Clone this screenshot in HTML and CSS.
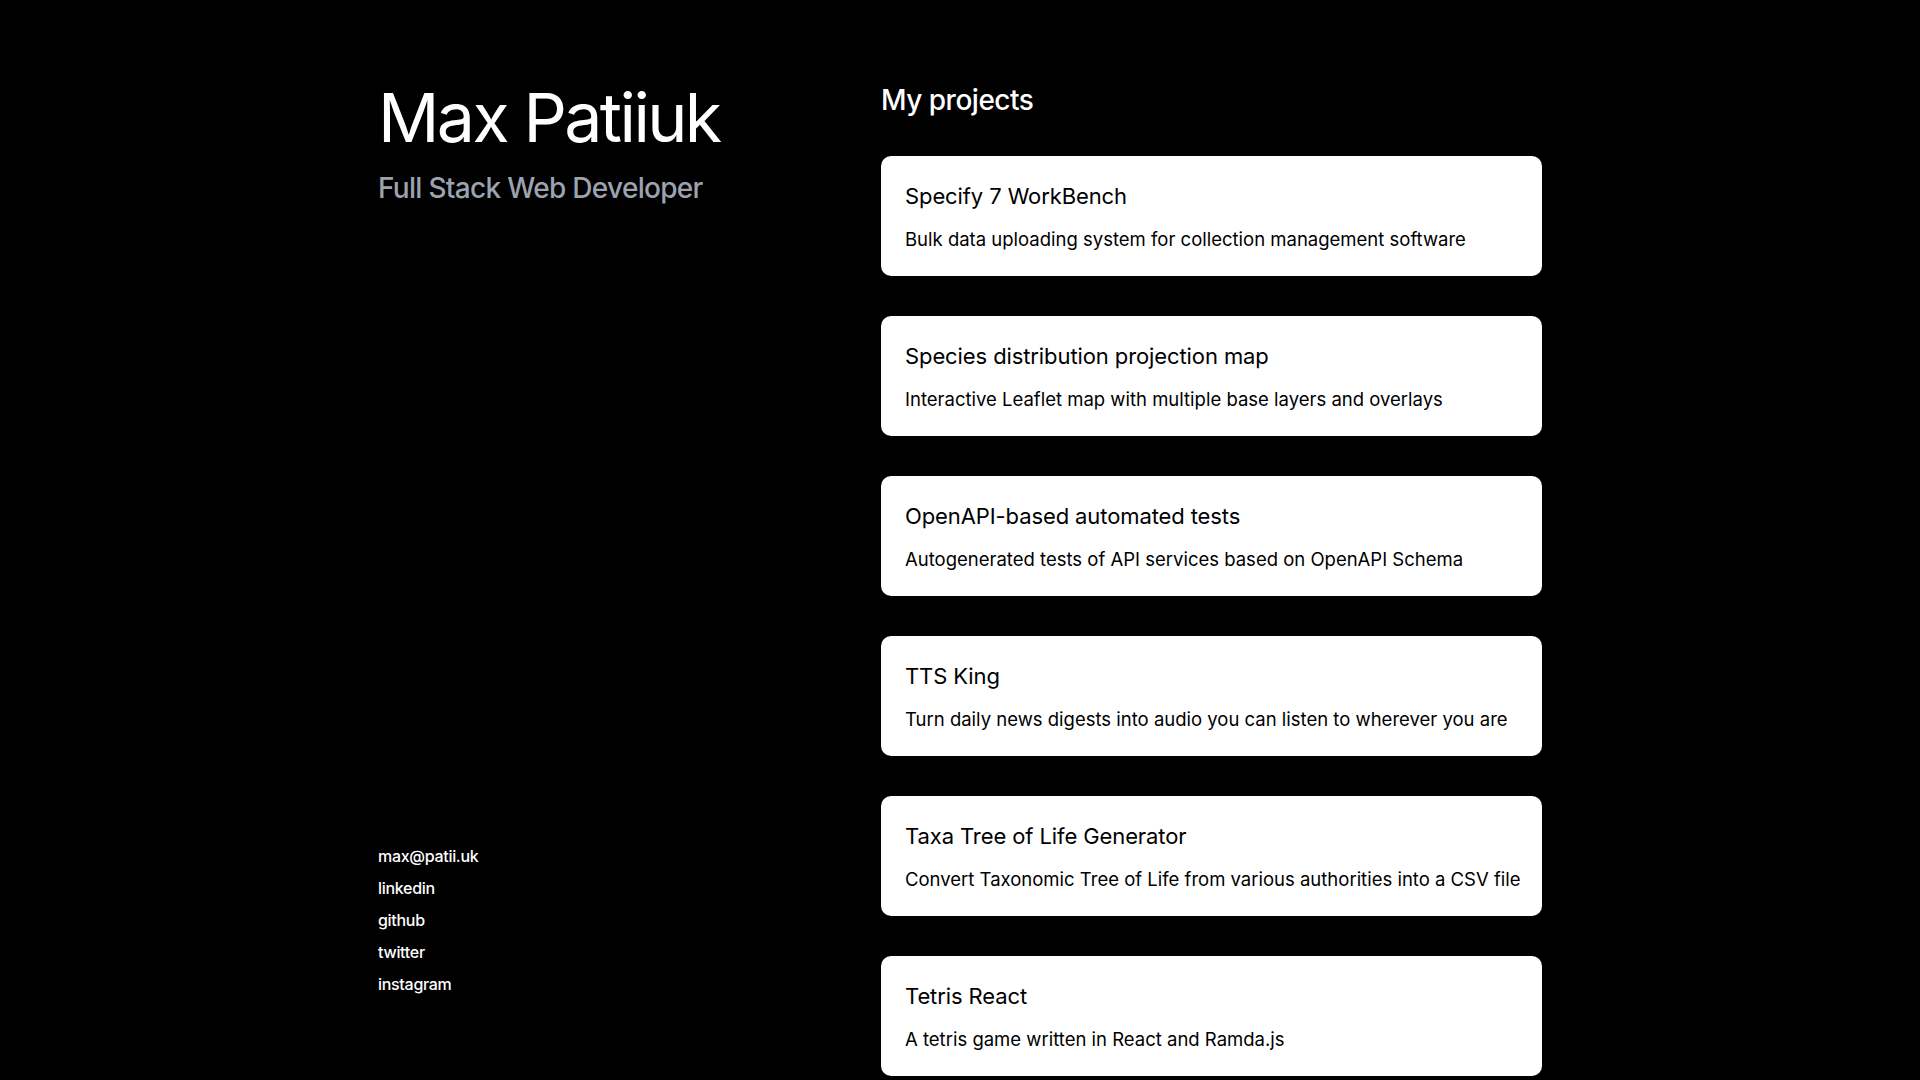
FILE: index.html
```html
<!doctype html>
<html>
<head>
    <meta charset="utf-8">
    <title>Max Patiiuk</title>
    <meta name="viewport" content="width=device-width, initial-scale=1">
    <link rel="stylesheet" href="styles.css">
</head>
<body class="page">
    <div class="layout">
        <header class="intro">
            <div class="intro-top">
                <h1 class="intro-name">Max Patiiuk</h1>
                <p class="intro-role">Full Stack Web Developer</p>
            </div>
            <ul class="intro-links">
                <li><a class="intro-link" href="mailto:max@patii.uk">max@patii.uk</a></li>
                <li><a class="intro-link" href="#">linkedin</a></li>
                <li><a class="intro-link" href="#">github</a></li>
                <li><a class="intro-link" href="#">twitter</a></li>
                <li><a class="intro-link" href="#">instagram</a></li>
            </ul>
        </header>

        <main class="projects">
            <h2 class="projects-title">My projects</h2>

            <a class="project" href="#">
                <h3 class="project-name">Specify 7 WorkBench</h3>
                <p class="project-text">Bulk data uploading system for collection management software</p>
            </a>
            <a class="project" href="#">
                <h3 class="project-name">Species distribution projection map</h3>
                <p class="project-text">Interactive Leaflet map with multiple base layers and overlays</p>
            </a>
            <a class="project" href="#">
                <h3 class="project-name">OpenAPI-based automated tests</h3>
                <p class="project-text">Autogenerated tests of API services based on OpenAPI Schema</p>
            </a>
            <a class="project" href="#">
                <h3 class="project-name">TTS King</h3>
                <p class="project-text">Turn daily news digests into audio you can listen to wherever you are</p>
            </a>
            <a class="project" href="#">
                <h3 class="project-name">Taxa Tree of Life Generator</h3>
                <p class="project-text">Convert Taxonomic Tree of Life from various authorities into a CSV file</p>
            </a>
            <a class="project" href="#">
                <h3 class="project-name">Tetris React</h3>
                <p class="project-text">A tetris game written in React and Ramda.js</p>
            </a>
        </main>
    </div>
</body>
</html>
```

FILE: styles.css
```css
* {
    box-sizing: border-box;
}

.page {
    margin: 0;
    background: #000;
    color: #fff;
    font-family: "Inter", "Liberation Sans", sans-serif;
    -webkit-font-smoothing: antialiased;
}

.layout {
    width: 1164px;
    margin: 0 auto;
    display: flex;
}

.intro {
    flex: 0 0 503px;
    height: 100vh;
    position: sticky;
    top: 0;
    padding: 83px 0 86px;
    display: flex;
    flex-direction: column;
    justify-content: space-between;
}

.intro-name {
    margin: 0;
    font-size: 68px;
    font-weight: 400;
    line-height: 1;
    letter-spacing: -2.6px;
}

.intro-role {
    margin: 20px 0 0;
    font-size: 28px;
    font-weight: 500;
    color: #9ca3af;
    letter-spacing: -0.7px;
}

.intro-links {
    list-style: none;
    margin: 0;
    padding: 0;
    display: flex;
    flex-direction: column;
    gap: 12px;
}

.intro-link {
    color: #fff;
    text-decoration: none;
    font-size: 16px;
    font-weight: 500;
    line-height: 20px;
    letter-spacing: -0.3px;
}

.projects {
    flex: 0 0 661px;
    padding: 85px 0 40px;
    display: flex;
    flex-direction: column;
    gap: 40px;
}

.projects-title {
    margin: 0 0 1px;
    font-size: 28px;
    font-weight: 500;
    line-height: 30px;
    letter-spacing: -0.5px;
}

.project {
    display: block;
    background: #fff;
    color: #000;
    text-decoration: none;
    border-radius: 10px;
    padding: 24px 20px 22px 24px;
    height: 120px;
}

.project-name {
    margin: 0;
    font-size: 22px;
    font-weight: 400;
    line-height: 32px;
    letter-spacing: -0.1px;
}

.project-text {
    margin: 13px 0 0;
    font-size: 18.5px;
    line-height: 28px;
    white-space: nowrap;
}
```
